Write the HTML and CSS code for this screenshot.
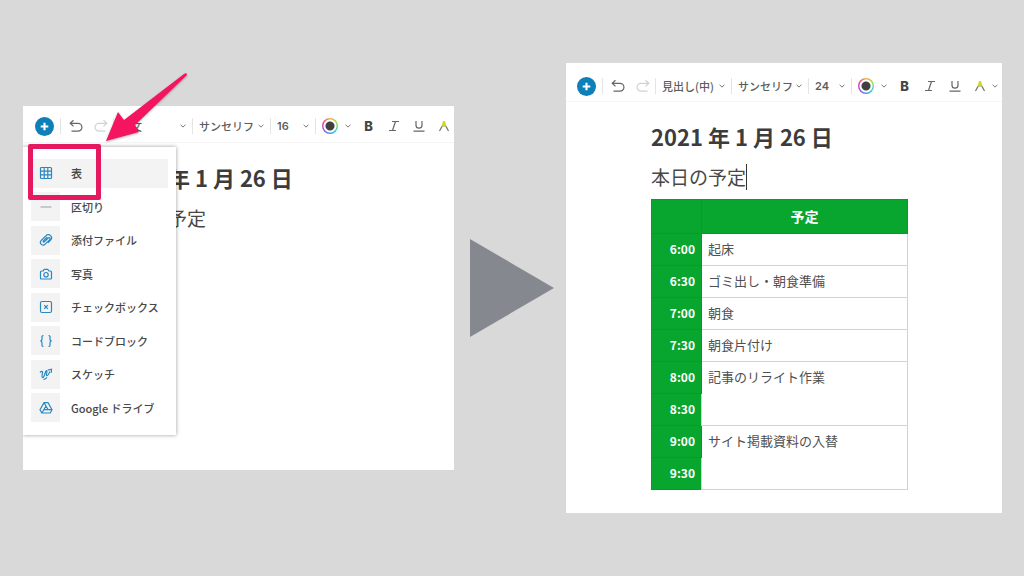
FILE: index.html
```html
<!DOCTYPE html>
<html lang="ja">
<head>
<meta charset="utf-8">
<title>表の挿入</title>
<link rel="stylesheet" href="styles.css">
</head>
<body>
<svg class="defs" aria-hidden="true">
  <symbol id="plus" viewBox="0 0 20 20"><circle cx="10" cy="10" r="10" fill="#0f7fb8"/><path d="M10 6v8M6 10h8" stroke="#fff" stroke-width="2.2"/></symbol>
  <symbol id="undo" viewBox="0 0 14 14"><path d="M4.500 1.200 1.200 4.300 4.500 7.400M1.500 4.300H9a3.900 3.900 0 0 1 0 7.900H2.500" fill="none" stroke="currentColor" stroke-width="1.200"/></symbol>
  <symbol id="chev" viewBox="0 0 6 4"><path d="M.6.8 3 3.100 5.400.8" fill="none" stroke="#777" stroke-width="1"/></symbol>
  <symbol id="italic" viewBox="0 0 12 12"><path d="M4 1.500h7M1 10.500h7M7.500 1.500l-3 9" fill="none" stroke="#666" stroke-width="1.200"/></symbol>
  <symbol id="underline" viewBox="0 0 12 12"><path d="M3 1v4.200a3 3 0 0 0 6 0V1M.5 11.200h11" fill="none" stroke="#666" stroke-width="1.200"/></symbol>
  <symbol id="marker" viewBox="0 0 12 12"><path d="M1.500 11 4 6.500 6 5.500l2 1L10.500 11" fill="none" stroke="#777" stroke-width="1.300"/><path d="M3.300 7 5 1h2l1.700 6L6 5.800z" fill="#d4d820"/></symbol>
</svg>

<main class="stage">
  <section class="panel panel-before">
    <div class="toolbar">
      <button class="add" aria-label="挿入"><svg><use href="#plus"/></svg></button>
      <span class="rule rule-first"></span>
      <button class="tool" aria-label="元に戻す"><svg class="i14"><use href="#undo"/></svg></button>
      <button class="tool faded" aria-label="やり直し"><svg class="i14 flip"><use href="#undo"/></svg></button>
      <span class="rule"></span>
      <label class="pick pick-style"><select aria-label="スタイル"><option>本文</option></select><svg><use href="#chev"/></svg></label>
      <span class="rule"></span>
      <label class="pick pick-font"><select aria-label="フォント"><option>サンセリフ</option></select><svg><use href="#chev"/></svg></label>
      <span class="rule"></span>
      <label class="pick pick-size"><select aria-label="サイズ"><option>16</option></select><svg><use href="#chev"/></svg></label>
      <span class="rule"></span>
      <button class="color" aria-label="文字色"><span class="ring"></span><svg class="chev"><use href="#chev"/></svg></button>
      <button class="tool bold">B</button>
      <button class="tool" aria-label="斜体"><svg class="i12"><use href="#italic"/></svg></button>
      <button class="tool" aria-label="下線"><svg class="i12"><use href="#underline"/></svg></button>
      <button class="tool" aria-label="ハイライト"><svg class="i12"><use href="#marker"/></svg></button>
    </div>
    <article class="note">
      <h1>2021 年 1 月 26 日</h1>
      <p>本日の予定</p>
    </article>
    <div class="menu">
      <button class="item active"><span class="tile"><svg viewBox="0 0 14 14"><rect x="1.500" y="1.500" width="11" height="11" rx="1"/><path d="M5.200 1.500v11M8.800 1.500v11M1.500 5.200h11M1.500 8.800h11"/></svg></span>表</button>
      <button class="item"><span class="tile"><svg class="grey" viewBox="0 0 14 14"><path d="M1.500 7h11"/></svg></span>区切り</button>
      <button class="item"><span class="tile"><svg viewBox="0 0 14 14"><path d="M4.800 9.400 9.200 5a1.100 1.100 0 0 1 1.600 1.600L6.200 11.200a2.700 2.700 0 0 1-4-3.700L7 2.700a3.100 3.100 0 0 1 4.600 4.400L9 9.800M4.800 9.400a1.100 1.100 0 0 1-.4-1.600L8.200 4"/></svg></span>添付ファイル</button>
      <button class="item"><span class="tile"><svg viewBox="0 0 14 14"><path d="M2.500 4h1.700l1-1.700h3.600l1 1.700h1.700q1 0 1 1v6q0 1-1 1h-9q-1 0-1-1V5q0-1 1-1z"/><circle cx="7" cy="7.700" r="2.200"/></svg></span>写真</button>
      <button class="item"><span class="tile"><svg viewBox="0 0 14 14"><rect x="1.500" y="1.500" width="11" height="11" rx="1.500"/><path d="m5.200 5.200 3.600 3.600M8.800 5.200 5.200 8.800"/></svg></span>チェックボックス</button>
      <button class="item"><span class="tile"><svg viewBox="0 0 14 14"><path d="M4.500 1.500C2.500 1.500 3 3 3 5c0 1.300-.6 2-1.800 2C2.400 7 3 7.700 3 9c0 2-.5 3.500 1.500 3.500M9.500 1.500c2 0 1.500 1.500 1.500 3.500 0 1.300.6 2 1.800 2-1.200 0-1.800.7-1.800 2 0 2 .5 3.500-1.500 3.500"/></svg></span>コードブロック</button>
      <button class="item"><span class="tile"><svg viewBox="0 0 14 14"><path d="M1 5.500c1.500-1.800 3-1.500 2.500.5-.4 1.800-1 4 0 4.500S6 7 6.500 5s1.800-2 1.400 0-.9 3.500 0 3.700S10.500 5.500 11 4.500M4.500 12.300c1.500.2 2.500-1 3.500-2M8.800 3.200l3.700-1-.2 3.600"/></svg></span>スケッチ</button>
      <button class="item"><span class="tile"><svg viewBox="0 0 14 14"><path d="M5 1.700h4l4 7-1.800 3.300H2.800L1 8.700zM5 1.700l4.200 7M9.200 8.700H13M7 5 2.800 12M4.600 8.700h4.600"/></svg></span>Google ドライブ</button>
    </div>
    <div class="highlight"></div>
    <svg class="pointer" viewBox="0 0 84 72"><path d="M2 69 14 40l6 8L80 2q3-2 3 1L31 53l4 7z"/></svg>
  </section>

  <svg class="next" viewBox="0 0 84 98" aria-hidden="true"><path d="M0 0 84 49 0 98z"/></svg>

  <section class="panel panel-after">
    <div class="toolbar">
      <button class="add" aria-label="挿入"><svg><use href="#plus"/></svg></button>
      <span class="rule rule-first"></span>
      <button class="tool" aria-label="元に戻す"><svg class="i14"><use href="#undo"/></svg></button>
      <button class="tool faded" aria-label="やり直し"><svg class="i14 flip"><use href="#undo"/></svg></button>
      <span class="rule"></span>
      <label class="pick pick-style"><select aria-label="スタイル"><option>見出し(中)</option></select><svg><use href="#chev"/></svg></label>
      <span class="rule"></span>
      <label class="pick pick-font"><select aria-label="フォント"><option>サンセリフ</option></select><svg><use href="#chev"/></svg></label>
      <span class="rule"></span>
      <label class="pick pick-size"><select aria-label="サイズ"><option>24</option></select><svg><use href="#chev"/></svg></label>
      <span class="rule"></span>
      <button class="color" aria-label="文字色"><span class="ring"></span><svg class="chev"><use href="#chev"/></svg></button>
      <button class="tool bold">B</button>
      <button class="tool" aria-label="斜体"><svg class="i12"><use href="#italic"/></svg></button>
      <button class="tool" aria-label="下線"><svg class="i12"><use href="#underline"/></svg></button>
      <button class="tool" aria-label="ハイライト"><svg class="i12"><use href="#marker"/></svg></button>
      <button class="more" aria-label="その他"><svg class="chev"><use href="#chev"/></svg></button>
    </div>
    <article class="note">
      <h1>2021 年 1 月 26 日</h1>
      <p><span class="caret">本日の予定</span></p>
      <table class="plan">
        <thead><tr><th class="time"></th><th>予定</th></tr></thead>
        <tbody>
          <tr><th class="time">6:00</th><td>起床</td></tr>
          <tr><th class="time">6:30</th><td>ゴミ出し・朝食準備</td></tr>
          <tr><th class="time">7:00</th><td>朝食</td></tr>
          <tr><th class="time">7:30</th><td>朝食片付け</td></tr>
          <tr><th class="time">8:00</th><td rowspan="2">記事のリライト作業</td></tr>
          <tr><th class="time">8:30</th></tr>
          <tr><th class="time">9:00</th><td rowspan="2">サイト掲載資料の入替</td></tr>
          <tr><th class="time">9:30</th></tr>
        </tbody>
      </table>
    </article>
  </section>
</main>
</body>
</html>
```

FILE: styles.css
```css
* { box-sizing: border-box; }
body {
  margin: 0;
  background: #d9d9d9;
  color: #484848;
  font-family: "Noto Sans CJK JP", "Noto Sans", sans-serif;
}
button, select {
  margin: 0;
  padding: 0;
  border: 0;
  background: none;
  color: inherit;
  font: inherit;
}
svg { display: block; }
.defs { position: absolute; width: 0; height: 0; }

.stage {
  display: flex;
  align-items: center;
  min-height: 100vh;
  padding: 0 22px 1px 23px;
}
.panel { position: relative; background: #fff; min-width: 0; }
.panel-before { flex: 431; min-height: 364px; }
.panel-after { flex: 436; min-height: 450px; }
.next { flex: none; width: 84px; height: 98px; margin: 0 12px 0 16px; fill: #85898f; }

/* Toolbar */
.toolbar {
  display: flex;
  align-items: center;
  overflow: hidden;
  border-bottom: 1px solid #f5f5f5;
  font-size: 11px;
  font-weight: 500;
}
.toolbar > * { flex: none; }
.panel-before .toolbar { height: 37px; padding: 5px 0 0 12px; }
.panel-after .toolbar { height: 39px; padding: 9px 0 0 11px; }
.add svg { width: 19px; height: 19px; }
.rule { width: 1px; height: 16px; background: #e4e4e4; }
.rule-first { margin: 0 2px 0 6px; }
.tool { display: grid; place-items: center; width: 25px; height: 24px; color: #666; }
.faded { color: #d2d2d2; }
.i14 { width: 14px; height: 14px; }
.i12 { width: 12px; height: 12px; }
.flip { transform: scaleX(-1); }
.bold { color: #444; font-family: Inter, sans-serif; font-size: 13px; font-weight: 800; }
.pick { display: grid; align-items: center; }
.pick select, .pick svg { grid-area: 1 / 1; }
.pick select { appearance: none; width: 100%; padding-left: 6px; color: #5c5c5c; }
.pick svg { justify-self: end; width: 6px; height: 4px; margin-right: 6px; pointer-events: none; }
.pick-style { width: 75px; }
.pick-font { width: 76px; }
.pick-size { width: 42px; }
.panel-before .pick-style { width: 78px; }
.panel-before .pick-font { width: 77px; }
.panel-before .pick-size { width: 44px; }
.pick-size select { font-family: Inter, sans-serif; font-weight: 600; }
.color { display: flex; align-items: center; gap: 7px; width: 40px; padding-left: 6px; }
.ring {
  display: grid;
  place-items: center;
  width: 16px;
  height: 16px;
  border-radius: 50%;
  background: radial-gradient(circle, #404040 0 4px, #fff 5px 6px, transparent 7px),
    conic-gradient(#f4b040, #a0e050, #40d0c8, #4098f0, #a050f0, #f040a8, #f4b040);
}
.chev { width: 6px; height: 4px; }

/* Note text */
.note { display: flex; flex-direction: column; }
.panel-before .note { padding: 17px 0 0 88px; }
.panel-after .note { padding: 17px 94px 23px 85px; }
h1 { margin: 0; font-size: 22px; line-height: 34px; font-weight: 700; color: #3c3c3c; white-space: nowrap; }
.note p { margin: 7px 0 0; font-size: 19px; line-height: 34px; }
.caret { display: inline-block; line-height: 26px; border-right: 1px solid #333; }

/* Schedule table */
.plan {
  width: 100%;
  margin-top: 5px;
  border-collapse: collapse;
  table-layout: fixed;
  font-size: 13px;
  line-height: 18px;
}
.plan tr { height: 32px; }
.plan thead tr { height: 34px; }
.plan th { border: 1px solid #079a2c; background: #08a62e; color: #fff; padding: 0; font-size: 14px; font-weight: 700; }
.plan .time { width: 50px; padding-right: 6px; font-size: 12px; text-align: right; }
.plan td { border: 1px solid #d2d2d2; padding: 6px; vertical-align: top; color: #505050; }

/* Insert menu */
.menu {
  position: absolute;
  top: 41px;
  left: 0;
  display: flex;
  flex-direction: column;
  justify-content: space-between;
  width: 153px;
  height: 288px;
  padding: 12px 8px;
  background: #fff;
  box-shadow: 0 0 4px rgba(0, 0, 0, .4);
  clip-path: inset(-6px -6px -6px 0);
}
.item { display: flex; align-items: center; gap: 11px; font-size: 11px; font-weight: 500; text-align: left; white-space: nowrap; }
.tile { display: grid; place-items: center; width: 29px; height: 29px; background: #f3f3f3; }
.tile svg { width: 14px; height: 14px; fill: none; stroke: #2a88c0; stroke-width: 1.2; }
.tile .grey { stroke: #8fa5b0; }
.active { background: #f3f3f3; }

/* Annotation over the menu */
.highlight { position: absolute; top: 38px; left: 5px; width: 73px; height: 56px; border: 5px solid #e5195f; border-radius: 2px; }
.pointer { position: absolute; top: -34px; left: 81px; width: 84px; height: 72px; fill: #f5145f; filter: drop-shadow(0 1px 1px rgba(0, 0, 0, .3)); }
```
